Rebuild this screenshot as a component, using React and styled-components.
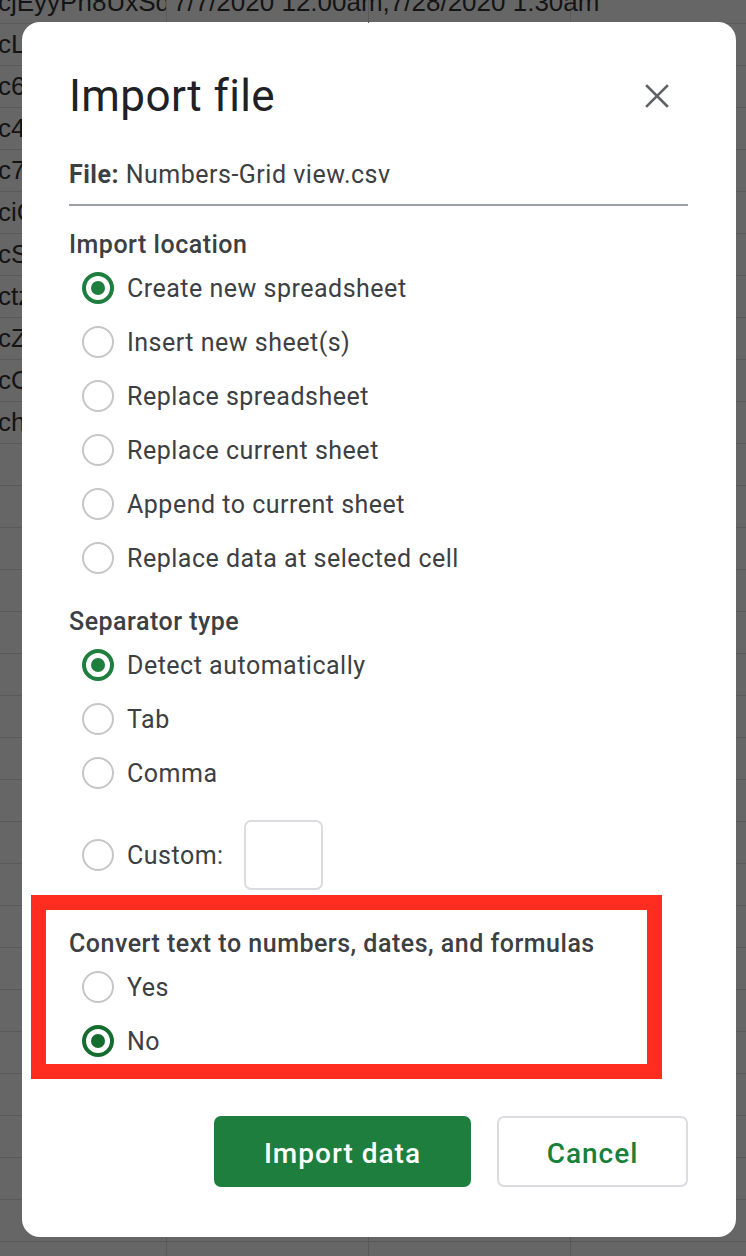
import React from 'react'
import styled, { createGlobalStyle } from 'styled-components'

const GlobalStyle = createGlobalStyle`
  html, body {
    margin: 0;
    padding: 0;
    background: #666666;
    overflow: hidden;
  }
  * {
    box-sizing: border-box;
  }
`

const green = '#1e7e3e'
const darkGreen = '#146c2e'

const Page = styled.div`
  position: relative;
  width: 746px;
  height: 1256px;
  overflow: hidden;
  background: #666666;
`

const Sheet = styled.div`
  margin-top: -18px;
  display: flex;
  flex-direction: column;
`

const SheetRow = styled.div`
  display: grid;
  grid-template-columns: 167px 202px 202px 202px;
  height: 42px;
  border-bottom: 1px solid #595959;
`

const Cell = styled.div`
  display: flex;
  align-items: center;
  border-right: 1px solid #595959;
  font-family: 'Liberation Sans', Arial, sans-serif;
  font-size: 26px;
  color: #141414;
  white-space: nowrap;
  overflow: ${p => (p.$spill ? 'visible' : 'hidden')};
  padding-left: ${p => (p.$first ? '0' : '6px')};
  position: relative;
  z-index: ${p => (p.$spill ? 1 : 0)};
  span {
    margin-left: ${p => (p.$first ? '-2px' : '0')};
  }
`

const Dialog = styled.div`
  position: absolute;
  top: 22px;
  left: 22px;
  width: 714px;
  height: 1215px;
  background: #ffffff;
  border-radius: 18px;
  padding: 50px 48px 0 47px;
  font-family: Roboto, 'Noto Sans', sans-serif;
  color: #3c4043;
`

const Header = styled.div`
  display: flex;
  align-items: center;
  justify-content: space-between;
  height: 48px;
`

const Title = styled.h1`
  margin: 0;
  font-size: 44px;
  font-weight: 400;
  line-height: 48px;
  color: #202124;
  letter-spacing: 0.4px;
`

const CloseButton = styled.button`
  border: none;
  background: none;
  padding: 0;
  margin-right: 18px;
  width: 26px;
  height: 26px;
  display: flex;
  align-items: center;
  justify-content: center;
  cursor: pointer;
`

const FileLine = styled.div`
  margin-top: 39px;
  padding-bottom: 13px;
  border-bottom: 2px solid #9aa0a6;
  font-size: 25px;
  letter-spacing: 0.5px;
  line-height: 32px;
  color: #3c4043;
  b {
    font-weight: 700;
  }
`

const SectionTitle = styled.h3`
  margin: ${p => p.$top ?? 23}px 0 0 0;
  font-size: 25px;
  letter-spacing: 0.5px;
  line-height: 32px;
  font-weight: 500;
  color: #3c4043;
`

const Option = styled.label`
  display: flex;
  align-items: center;
  height: ${p => p.$height ?? 54}px;
  margin-top: ${p => p.$top ?? 0}px;
  padding-left: 13px;
  gap: 13px;
  font-size: 25px;
  letter-spacing: 0.5px;
  color: #3c4043;
  cursor: pointer;
`

const Radio = styled.span`
  width: 32px;
  height: 32px;
  border-radius: 50%;
  flex-shrink: 0;
  border: ${p => (p.$checked ? `4px solid ${p.$color}` : '2px solid #c6c6c6')};
  display: flex;
  align-items: center;
  justify-content: center;
  &::after {
    content: '';
    display: ${p => (p.$checked ? 'block' : 'none')};
    width: 14px;
    height: 14px;
    border-radius: 50%;
    background: ${p => p.$color};
  }
`

const CustomInput = styled.div`
  margin-left: 7px;
  width: 79px;
  height: 70px;
  border: 2px solid #dadce0;
  border-radius: 7px;
`

const Highlight = styled.div`
  margin: 5px 0 0 -38px;
  width: 631px;
  height: 184px;
  border: 15px solid #ff2d20;
  padding: 18px 0 0 23px;
`

const Actions = styled.div`
  margin-top: 37px;
  display: flex;
  justify-content: flex-end;
  gap: 26px;
`

const Button = styled.button`
  height: 71px;
  width: ${p => p.$width}px;
  padding: 4px 0 0 0;
  border-radius: 7px;
  font-family: Roboto, 'Noto Sans', sans-serif;
  font-size: 28px;
  letter-spacing: 1px;
  font-weight: 500;
  cursor: pointer;
  background: ${p => (p.$primary ? green : '#ffffff')};
  color: ${p => (p.$primary ? '#ffffff' : '#188038')};
  border: ${p => (p.$primary ? 'none' : '2px solid #dadce0')};
`

const rows = ['cL', 'c6', 'c4', 'c7', 'ciG', 'cS', 'ctz', 'cZ', 'cO', 'ch']

const RadioOption = ({ label, checked, color = green, top, height, children }) => (
  <Option $top={top} $height={height}>
    <Radio $checked={checked} $color={color} />
    {label}
    {children}
  </Option>
)

const Background = () => (
  <Sheet>
    <SheetRow>
      <Cell $first><span>cjEyyPh8UxSd</span></Cell>
      <Cell $spill>7/7/2020 12:00am,7/28/2020 1:30am</Cell>
      <Cell />
      <Cell />
    </SheetRow>
    {rows.map(r => (
      <SheetRow key={r}>
        <Cell $first><span>{r}</span></Cell>
        <Cell />
        <Cell />
        <Cell />
      </SheetRow>
    ))}
    {Array.from({ length: 20 }).map((_, i) => (
      <SheetRow key={i}>
        <Cell />
        <Cell />
        <Cell />
        <Cell />
      </SheetRow>
    ))}
  </Sheet>
)

export default function App() {
  return (
    <Page>
      <GlobalStyle />
      <Background />
      <Dialog>
        <Header>
          <Title>Import file</Title>
          <CloseButton aria-label="Close">
            <svg width="24" height="24" viewBox="0 0 24 24">
              <path d="M2 2 L22 22 M22 2 L2 22" stroke="#5f6368" strokeWidth="2.6" strokeLinecap="square" fill="none" />
            </svg>
          </CloseButton>
        </Header>
        <FileLine>
          <b>File:</b> Numbers-Grid view.csv
        </FileLine>

        <SectionTitle $top={23}>Import location</SectionTitle>
        <RadioOption label="Create new spreadsheet" checked />
        <RadioOption label="Insert new sheet(s)" />
        <RadioOption label="Replace spreadsheet" />
        <RadioOption label="Replace current sheet" />
        <RadioOption label="Append to current sheet" />
        <RadioOption label="Replace data at selected cell" />

        <SectionTitle $top={21}>Separator type</SectionTitle>
        <RadioOption label="Detect automatically" checked />
        <RadioOption label="Tab" />
        <RadioOption label="Comma" />
        <RadioOption label="Custom:" top={20} height={70}>
          <CustomInput />
        </RadioOption>

        <Highlight>
          <SectionTitle $top={0}>Convert text to numbers, dates, and formulas</SectionTitle>
          <RadioOption label="Yes" />
          <RadioOption label="No" checked color={darkGreen} />
        </Highlight>

        <Actions>
          <Button $primary $width={257}>Import data</Button>
          <Button $width={191}>Cancel</Button>
        </Actions>
      </Dialog>
    </Page>
  )
}
